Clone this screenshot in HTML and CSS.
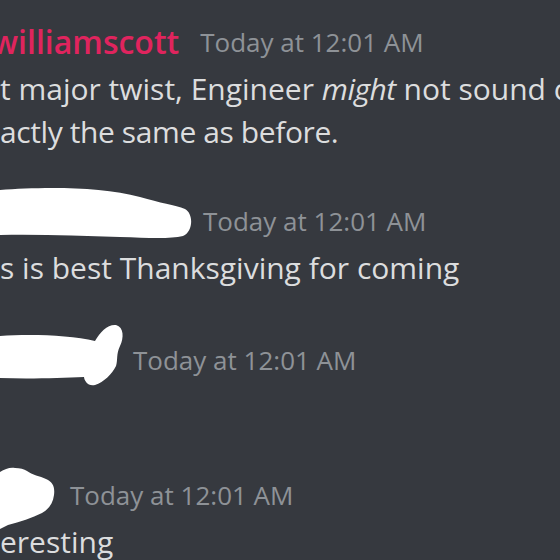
FILE: index.html
```html
<!DOCTYPE html>
<html>
<head>
<meta charset="utf-8">
<link rel="stylesheet" href="styles.css">
</head>
<body>
<main class="chat">
  <section class="msg msg-1">
    <div class="header">
      <span class="username">williamscott</span>
      <span class="time">Today at 12:01 AM</span>
    </div>
    <p class="text">t major twist, Engineer <em>might</em> not sound c<br><span class="tight">actly the same as before.</span></p>
  </section>

  <section class="msg msg-2">
    <div class="header">
      <svg class="blob blob-1" width="192" height="54" viewBox="0 0 192 54"><path d="M0,3 C40,0 100,-1 140,10 C160,16 175,18 185,22 C194,27 193,45 183,49 C170,52 150,51 120,50 C80,49 40,47 0,48 Z" fill="#fff"/></svg>
      <span class="time">Today at 12:01 AM</span>
    </div>
    <p class="text">s is best Thanksgiving for coming</p>
  </section>

  <section class="msg msg-3">
    <div class="header">
      <svg class="blob blob-2" width="125" height="66" viewBox="0 0 125 66"><path d="M0,14 C30,12 70,13 95,19 C100,10 108,2 116,3 C124,5 124,16 120,24 C116,32 118,38 116,44 C112,52 104,60 95,63 C88,65 84,58 84,55 C60,56 30,57 0,56 Z" fill="#fff"/></svg>
      <span class="time">Today at 12:01 AM</span>
    </div>
  </section>

  <section class="msg msg-4">
    <div class="header">
      <svg class="blob blob-3" width="56" height="68" viewBox="0 0 56 68"><path d="M0,7 C5,4 10,2 15,3 C20,3 24,4 27,6 C32,10 40,11 46,14 C53,17 55,22 54,30 C53,38 49,44 42,48 C32,53 20,57 8,60 L0,64 Z" fill="#fff"/></svg>
      <span class="time">Today at 12:01 AM</span>
    </div>
    <p class="text">eresting</p>
  </section>
</main>
</body>
</html>
```

FILE: styles.css
```css
html, body {
  margin: 0;
  padding: 0;
  background: #36393f;
  width: 560px;
  height: 560px;
  overflow: hidden;
}

.chat {
  display: flex;
  flex-direction: column;
  padding-top: 20px;
  font-family: "Open Sans", "Noto Sans", sans-serif;
  color: #dcddde;
}

.msg {
  display: flex;
  flex-direction: column;
}

.header {
  display: flex;
  align-items: center;
  height: 43px;
  white-space: nowrap;
}

.username {
  color: #e0245e;
  font-weight: 600;
  font-size: 32px;
  margin-left: -8px;
  margin-right: 21px;
}

.time {
  color: #8e9297;
  font-size: 26px;
}

.text {
  margin: 4px 0 0;
  font-size: 30px;
  line-height: 43px;
  white-space: nowrap;
}

.text em {
  font-style: italic;
  letter-spacing: -0.5px;
}

.tight {
  letter-spacing: -0.4px;
}

.blob {
  display: block;
  align-self: flex-start;
  flex: none;
}

.blob-1 {
  margin: -12px 11px 0 0;
}

.blob-2 {
  margin: -16px 8px 0 0;
}

.blob-3 {
  margin: -8px 14px 0 0;
}

.msg-2 { margin-top: 46px; }
.msg-3 { margin-top: 49px; }
.msg-4 { margin-top: 92px; }
```
